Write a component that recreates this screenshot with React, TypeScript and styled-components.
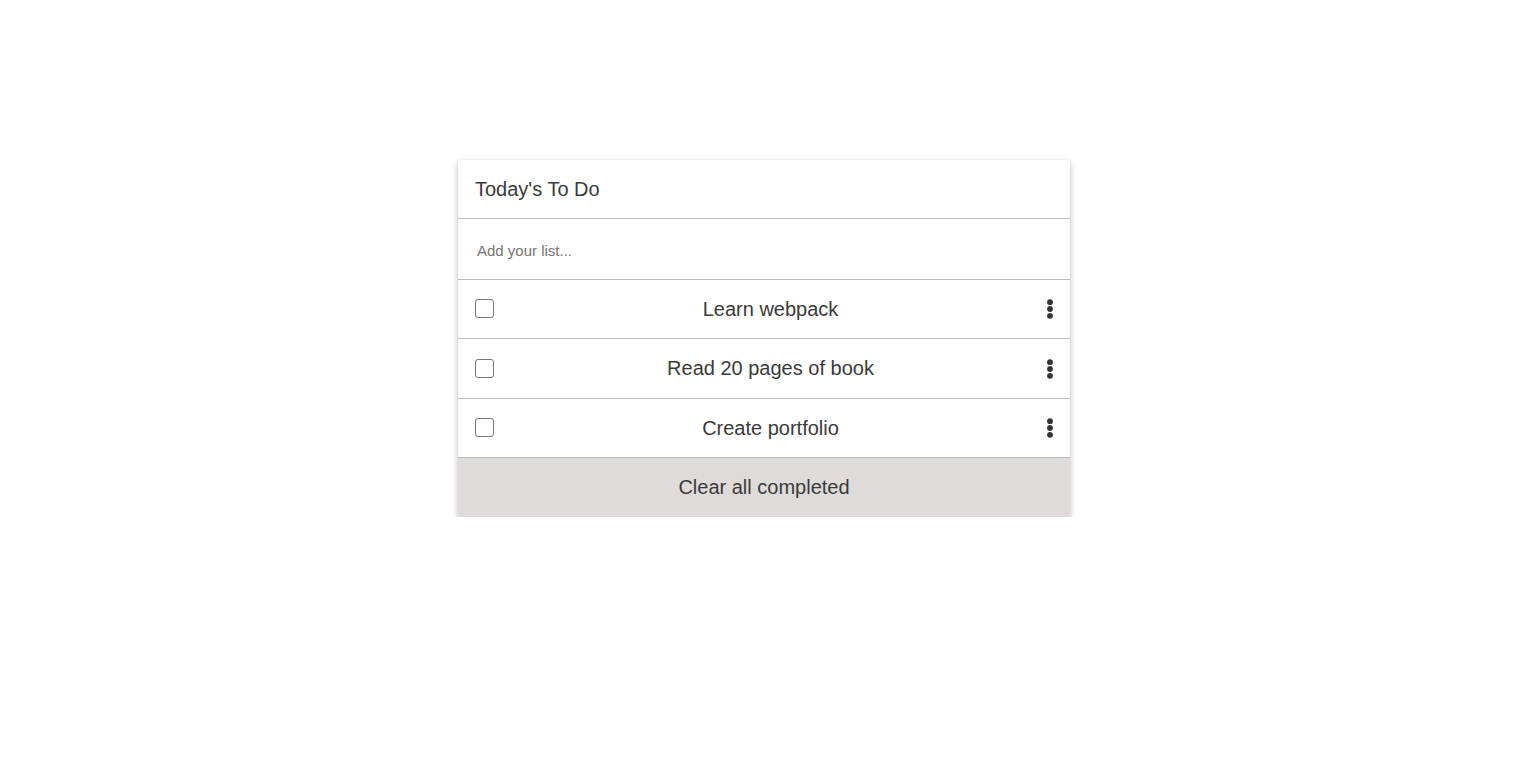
import React from "react";
import styled, { createGlobalStyle } from "styled-components";

const Global = createGlobalStyle`
  body { margin: 0; background: #fff; font-family: "Liberation Sans", Arial, sans-serif; }
`;

const Page = styled.div`
  display: flex;
  justify-content: center;
  padding-top: 160px;
`;

const Card = styled.div`
  width: 612px;
  background: #fff;
  border-radius: 3px;
  box-shadow: 0 2px 6px rgba(0, 0, 0, 0.28);
  display: flex;
  flex-direction: column;
  overflow: hidden;
  color: #3a3a3a;
`;

const Header = styled.div`
  height: 58px;
  display: flex;
  align-items: center;
  padding: 0 17px;
  font-size: 20px;
  border-bottom: 1px solid #bbb;
`;

const InputRow = styled.div`
  height: 60px;
  display: flex;
  align-items: center;
  padding: 0 19px;
  border-bottom: 1px solid #bbb;
`;

const Input = styled.input`
  border: none;
  outline: none;
  width: 100%;
  font-family: "Liberation Sans", Arial, sans-serif;
  font-size: 15px;
  color: #3a3a3a;
  padding: 0;
  margin-top: 2px;
  &::placeholder { color: #757575; }
`;

const Row = styled.div<{ $h: number }>`
  height: ${(p) => p.$h}px;
  display: flex;
  align-items: center;
  padding: 0 17px;
  border-bottom: 1px solid #bbb;
`;

const Check = styled.span`
  width: 19px;
  height: 19px;
  box-sizing: border-box;
  border: 1.5px solid #777;
  border-radius: 3px;
  flex: none;
  margin-top: -1px;
`;

const Label = styled.span`
  flex: 1;
  text-align: center;
  font-size: 20px;
  padding-left: 1px;
`;

const Dots = styled.svg`
  width: 8px;
  height: 20px;
  flex: none;
  margin-right: -1px;
`;

const Footer = styled.div`
  height: 59px;
  display: flex;
  align-items: center;
  justify-content: center;
  background: #dfdbda;
  font-size: 20px;
`;

const items = [
  { t: "Learn webpack", h: 58 },
  { t: "Read 20 pages of book", h: 59 },
  { t: "Create portfolio", h: 58 },
];

export default function App() {
  return (
    <>
      <Global />
      <Page>
        <Card>
          <Header>Today's To Do</Header>
          <InputRow>
            <Input placeholder="Add your list..." />
          </InputRow>
          {items.map((it) => (
            <Row key={it.t} $h={it.h}>
              <Check />
              <Label>{it.t}</Label>
              <Dots viewBox="0 0 8 20">
                <circle cx="4" cy="3.2" r="2.9" fill="#333" />
                <circle cx="4" cy="10" r="2.9" fill="#333" />
                <circle cx="4" cy="16.8" r="2.9" fill="#333" />
              </Dots>
            </Row>
          ))}
          <Footer>Clear all completed</Footer>
        </Card>
      </Page>
    </>
  );
}
